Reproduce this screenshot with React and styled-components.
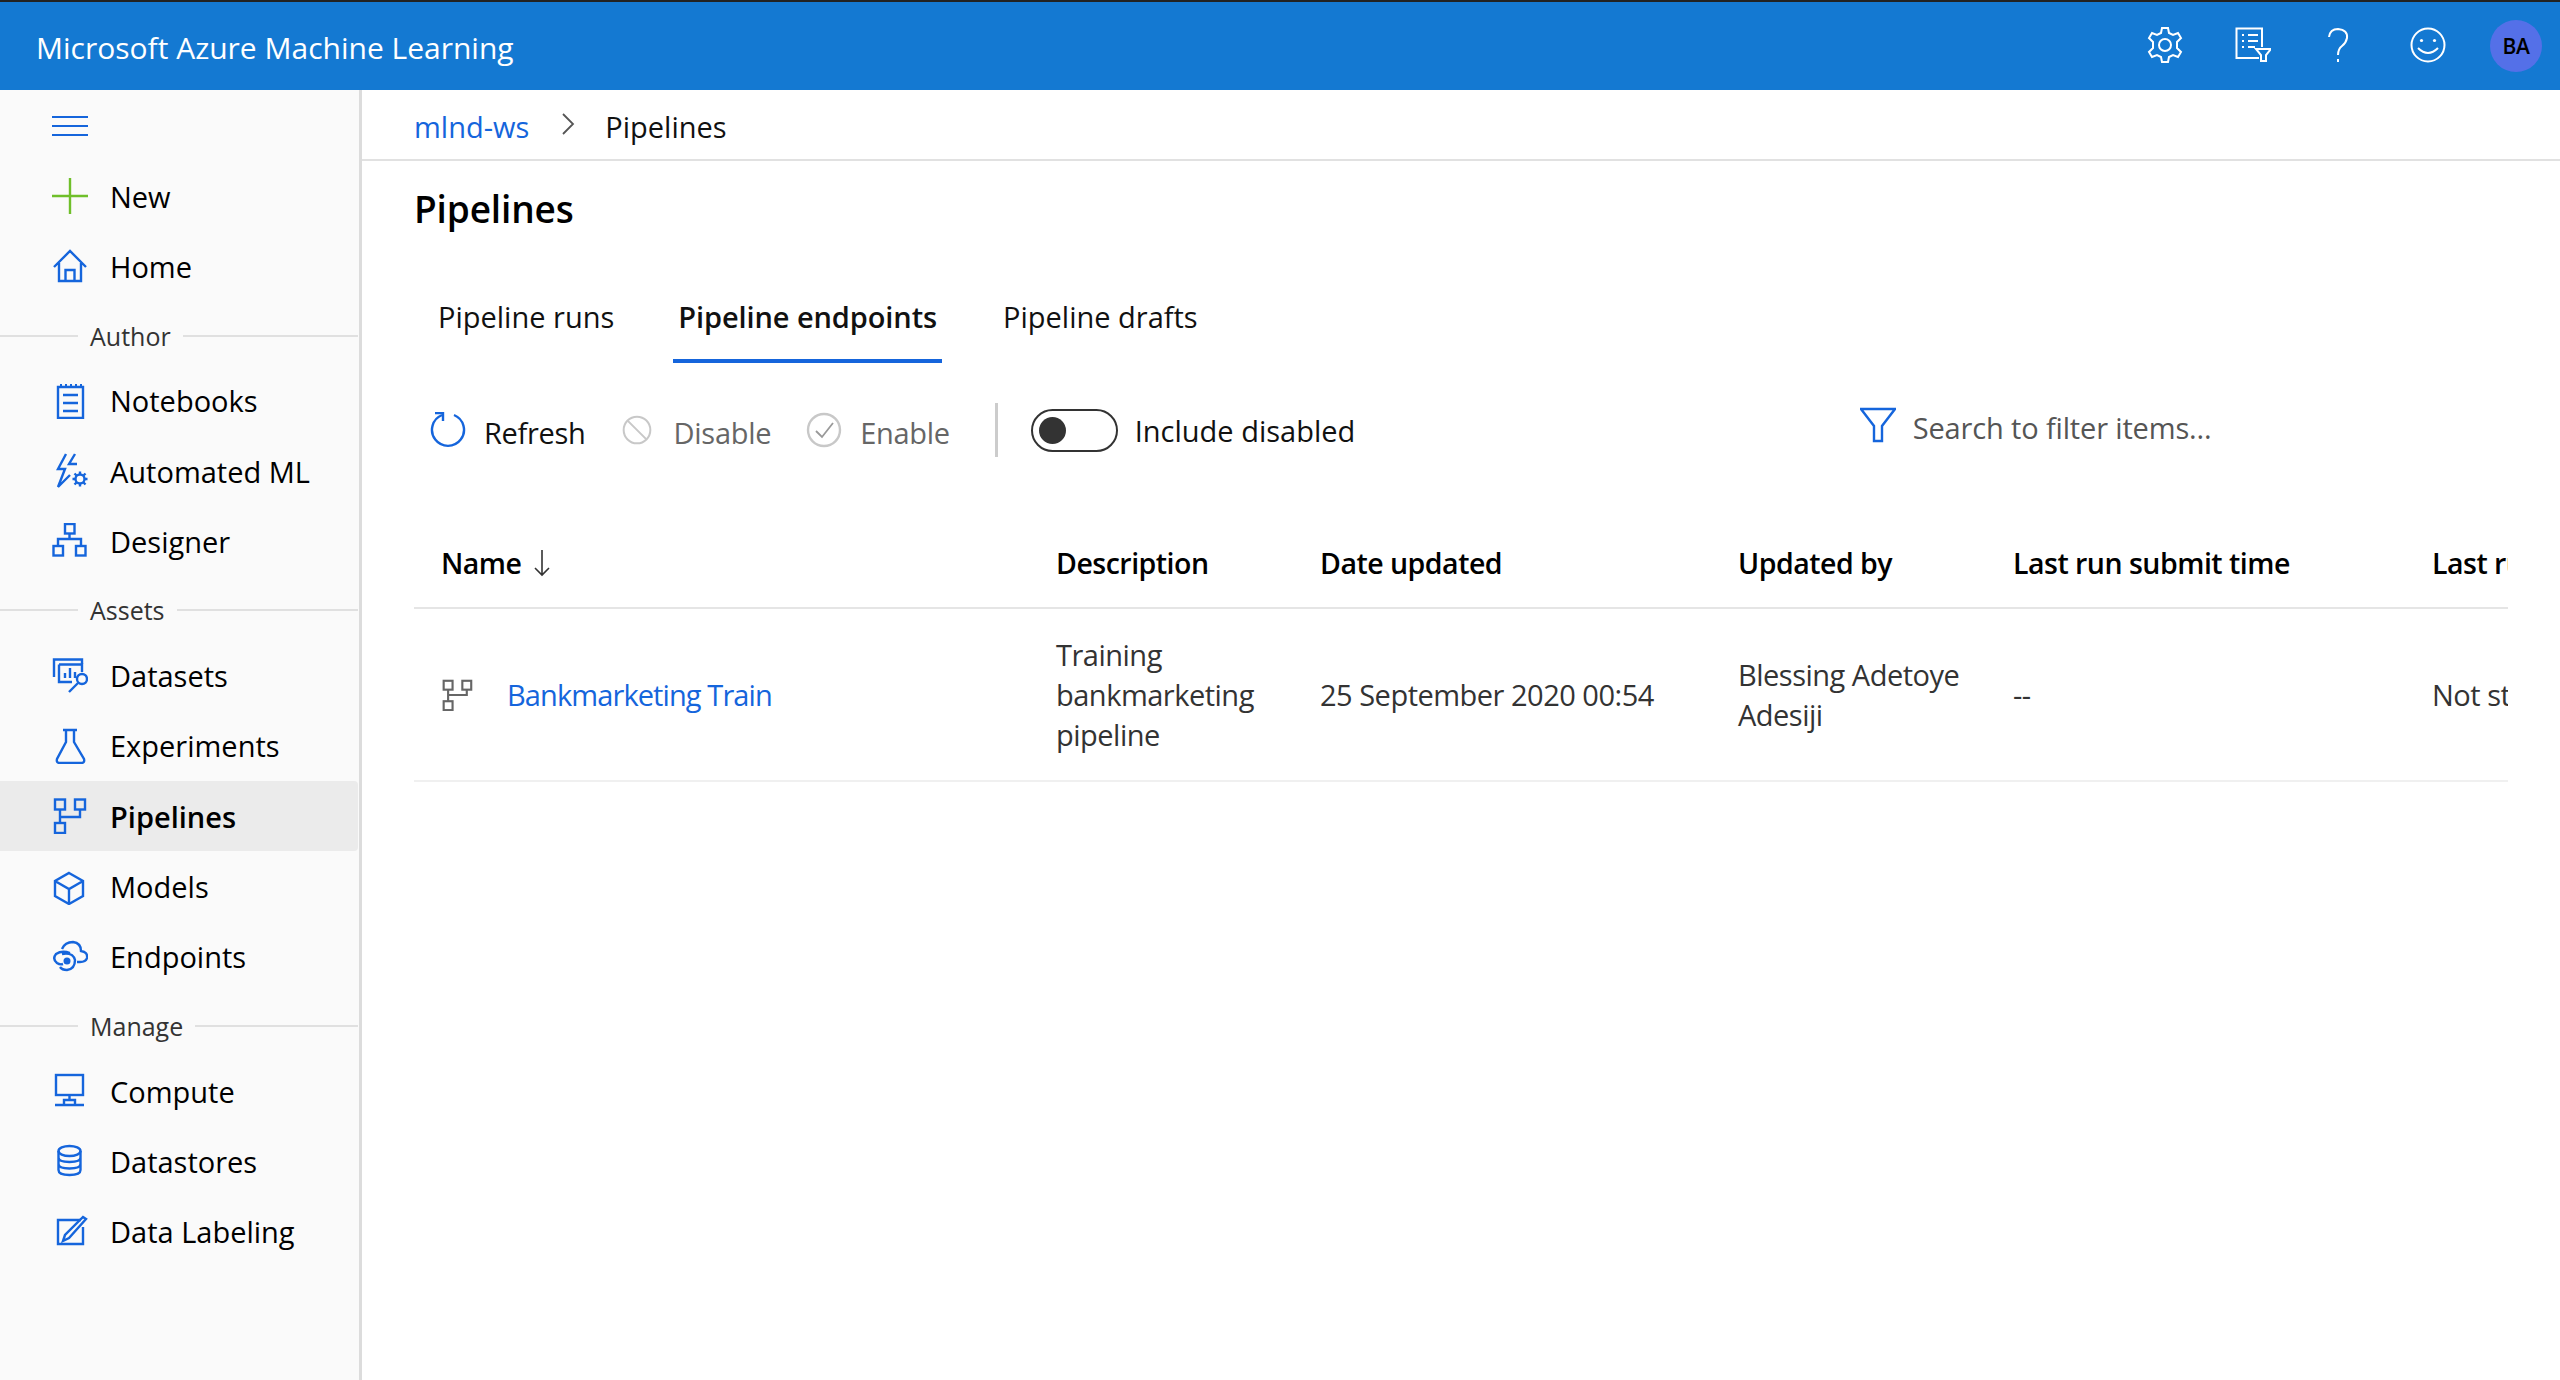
import React from "react";
import styled, { createGlobalStyle } from "styled-components";

const Global = createGlobalStyle`
  html, body { margin: 0; padding: 0; background: #fff; }
  body { font-family: "Open Sans", "Noto Sans", sans-serif; color: #000; overflow: hidden; }
  * { box-sizing: border-box; }
`;

const Page = styled.div`
  width: 2560px;
  height: 1380px;
  display: flex;
  flex-direction: column;
  overflow: hidden;
`;

const TopBar = styled.header`
  height: 90px;
  flex: none;
  background: #1479d2;
  border-top: 2px solid #222;
  color: #fff;
  display: flex;
  align-items: center;
  padding: 0 18px 0 36px;
`;

const Brand = styled.div`
  font-size: 30px;
  margin-top: 3px;
  flex: 1;
`;

const TopIcons = styled.div`
  display: flex;
  align-items: center;
`;

const TopIcon = styled.svg`
  width: 36px;
  height: 36px;
  margin-top: -2px;
  margin-right: ${({ $gap }) => $gap}px;
  fill: none;
  stroke: #fff;
  stroke-width: 2;
`;

const Avatar = styled.div`
  width: 52px;
  height: 52px;
  border-radius: 50%;
  background: #5470e8;
  color: #000;
  font-size: 21px;
  font-weight: 600;
  letter-spacing: -0.3px;
  display: flex;
  align-items: center;
  justify-content: center;
`;

const Body = styled.div`
  flex: 1;
  display: flex;
  min-height: 0;
`;

const Sidebar = styled.nav`
  width: 362px;
  flex: none;
  background: #fafafa;
  border-right: 3px solid #dcdcdc;
  padding-right: 1px;
`;

const Hamburger = styled.div`
  height: 71px;
  padding-left: 52px;
  display: flex;
  align-items: center;
`;

const NavRow = styled.div`
  height: 70.3px;
  display: flex;
  align-items: center;
  padding-left: 52px;
  font-size: 29px;
  border-radius: 0 4px 4px 0;
  font-weight: ${({ $active }) => ($active ? 600 : 400)};
  background: ${({ $active }) => ($active ? "#ebebeb" : "transparent")};
`;

const NavLabel = styled.span`
  margin-left: 22px;
`;

const SectionRow = styled.div`
  height: 64px;
  padding-top: 4px;
  display: flex;
  align-items: center;
  font-size: 25px;
  color: #333;
  &::before {
    content: "";
    width: 78px;
    height: 2px;
    background: #e0e0e0;
    margin-right: 12px;
  }
  &::after {
    content: "";
    flex: 1;
    height: 2px;
    background: #e0e0e0;
    margin-left: 12px;
  }
`;

const Icon = styled.svg`
  width: ${({ $size }) => $size || 36}px;
  height: ${({ $size }) => $size || 36}px;
  flex: none;
  fill: none;
  stroke: ${({ $color }) => $color || "#1565dc"};
  stroke-width: 2.4;
`;

const Main = styled.main`
  flex: 1;
  min-width: 0;
`;

const Breadcrumb = styled.div`
  height: 71px;
  border-bottom: 2px solid #e1e1e1;
  padding: 3px 0 0 52px;
  display: flex;
  align-items: center;
  font-size: 29px;
`;

const Crumb = styled.span`
  color: ${({ $link }) => ($link ? "#1565dc" : "#111")};
`;

const CrumbSep = styled.svg`
  width: 14px;
  height: 24px;
  margin: -4px 30px 0 32px;
  fill: none;
  stroke: #555;
  stroke-width: 1.8;
`;

const Content = styled.div`
  padding: 0 52px;
`;

const Title = styled.h1`
  margin: 0;
  height: 94px;
  display: flex;
  align-items: center;
  font-size: 37px;
  font-weight: 600;
  letter-spacing: -0.15px;
`;

const Tabs = styled.div`
  display: flex;
  height: 108px;
  align-items: stretch;
`;

const Tab = styled.div`
  display: flex;
  align-items: center;
  font-size: 29px;
  padding: 19px ${({ $side }) => $side}px 0;
  margin-right: ${({ $after }) => $after}px;
  font-weight: ${({ $active }) => ($active ? 600 : 400)};
  letter-spacing: ${({ $active }) => ($active ? "-0.1px" : "0")};
  border-bottom: 4px solid ${({ $active }) => ($active ? "#1565dc" : "transparent")};
  color: #111;
`;

const Toolbar = styled.div`
  height: 112px;
  margin-top: 11px;
  padding-left: 16px;
  display: flex;
  align-items: center;
`;

const ToolButton = styled.div`
  display: flex;
  align-items: center;
  font-size: 29px;
  letter-spacing: -0.3px;
  margin-right: ${({ $after }) => $after}px;
  color: ${({ $off }) => ($off ? "#666" : "#111")};
`;

const ToolText = styled.span`
  margin-left: ${({ $gap }) => $gap}px;
  margin-top: 4px;
`;

const ToolSep = styled.div`
  width: 3px;
  height: 54px;
  background: #ccc;
  margin: 0 33px 0 45px;
`;

const Toggle = styled.div`
  width: 87px;
  height: 43px;
  border: 2px solid #333;
  border-radius: 22px;
  padding: 6px;
  margin-right: 17px;
`;

const Knob = styled.div`
  width: 27px;
  height: 27px;
  border-radius: 50%;
  background: #333;
`;

const ToggleLabel = styled.span`
  font-size: 29px;
  color: #111;
  width: 725px;
`;

const Filter = styled.div`
  display: flex;
  align-items: center;
  margin-top: -10px;
  font-size: 29px;
  letter-spacing: -0.15px;
  color: #555;
`;

const Table = styled.div`
  margin-top: 32px;
  overflow: hidden;
  width: 2094px;
`;

const Row = styled.div`
  display: grid;
  grid-template-columns: 615px 264px 418px 275px 419px 200px;
  align-items: center;
  border-bottom: 2px solid ${({ $head }) => ($head ? "#e5e5e5" : "#f0f0f0")};
  height: ${({ $head }) => ($head ? 91 : 173)}px;
  font-size: ${({ $head }) => ($head ? 28.5 : 29)}px;
  line-height: 40px;
  letter-spacing: -0.5px;
  font-weight: ${({ $head }) => ($head ? 600 : 400)};
  color: ${({ $head }) => ($head ? "#000" : "#333")};
`;

const Cell = styled.div`
  padding-left: 27px;
  display: flex;
  align-items: center;
  white-space: ${({ $wrap }) => ($wrap ? "normal" : "nowrap")};
  padding-right: ${({ $wrap }) => ($wrap ? 20 : 0)}px;
`;

const RowLink = styled.span`
  color: #1565dc;
  margin-left: 34px;
  letter-spacing: -0.9px;
`;

const SortArrow = styled.svg`
  width: 18px;
  height: 30px;
  margin-left: 12px;
  fill: none;
  stroke: #333;
  stroke-width: 1.6;
`;

const PipelineGlyph = () => (
  <Icon viewBox="0 0 36 36">
    <rect x="3" y="1.5" width="10" height="10" />
    <rect x="23" y="1.5" width="10" height="10" />
    <rect x="3" y="25" width="10" height="10" />
    <path d="M8 11.5V25M8 19H28V11.5" />
  </Icon>
);

const navIcons = {
  new: (
    <Icon viewBox="0 0 36 36" $color="#6fbf2a">
      <path d="M18 0V36M0 18H36" />
    </Icon>
  ),
  home: (
    <Icon viewBox="0 0 36 36">
      <path d="M2 19L18 3L34 19M7 15V33H29V15M13.5 33V22H22.5V33" />
    </Icon>
  ),
  notebooks: (
    <Icon viewBox="0 0 36 36">
      <path d="M6 4H31V35H6ZM11 12H26M11 20H26M11 28H26" />
      <path d="M9 1V4M14 1V4M19 1V4M24 1V4M29 1V4" strokeWidth="2" />
    </Icon>
  ),
  automl: (
    <Icon viewBox="0 0 36 36">
      <path d="M14 1L6 16H13L6 34L18 22" />
      <path d="M23 1L17 11H25" />
      <circle cx="28" cy="26" r="4.5" />
      <path d="M28 18.5V21.5M28 30.5V33.5M20.5 26H23.5M32.5 26H35.5M22.5 20.5L24.5 22.5M31.5 29.5L33.5 31.5M33.5 20.5L31.5 22.5M24.5 29.5L22.5 31.5" />
    </Icon>
  ),
  designer: (
    <Icon viewBox="0 0 36 36">
      <rect x="13" y="1" width="9.5" height="9.5" />
      <rect x="1.5" y="23" width="9.5" height="9.5" />
      <rect x="24" y="23" width="9.5" height="9.5" />
      <path d="M17.5 10.5V16M6 23V16H29V23" />
    </Icon>
  ),
  datasets: (
    <Icon viewBox="0 0 36 36">
      <path d="M2 19V1.5H30V6" />
      <path d="M7 6.5H30V14M7 6.5V24H20" />
      <path d="M13 20V15M18 20V10M23 20V14" />
      <circle cx="30" cy="21" r="5" />
      <path d="M26 25L17 34" />
    </Icon>
  ),
  experiments: (
    <Icon viewBox="0 0 36 36">
      <path d="M11 2H25M14 2V14L5 31Q4 35 8 35H29Q33 35 32 31L22 14V2" />
    </Icon>
  ),
  pipelines: <PipelineGlyph />,
  models: (
    <Icon viewBox="0 0 36 36">
      <path d="M17 4L31 12V27L17 35L3 27V12ZM3 12L17 20L31 12M17 20V35" />
    </Icon>
  ),
  endpoints: (
    <Icon viewBox="0 0 36 36">
      <path d="M10 10Q13 3 21 3Q29 4 29 12Q36 13 35 19Q34 23 28 23H25" />
      <path d="M18 14Q10 11 4 15Q0 20 5 24Q8 26 11 25" />
      <path d="M10 15Q21 13 23 21Q23 30 15 31Q10 31 8 28" />
      <circle cx="15" cy="22" r="3.5" fill="#1565dc" stroke="none" />
    </Icon>
  ),
  compute: (
    <Icon viewBox="0 0 36 36">
      <rect x="4" y="2" width="27" height="20" />
      <path d="M17.5 22V26M12 32V27H23V32M3 32H32" />
    </Icon>
  ),
  datastores: (
    <Icon viewBox="0 0 36 36">
      <ellipse cx="17.5" cy="8" rx="11" ry="5" />
      <path d="M6.5 8V27Q6.5 32 17.5 32Q28.5 32 28.5 27V8M6.5 14.5Q6.5 19 17.5 19Q28.5 19 28.5 14.5M6.5 21Q6.5 25.5 17.5 25.5Q28.5 25.5 28.5 21" />
    </Icon>
  ),
  labeling: (
    <Icon viewBox="0 0 36 36">
      <path d="M29 6H6V30H31V13" />
      <path d="M31 3L34 5L17 24L11 27L13 21Z" />
    </Icon>
  ),
};

const navGroups = [
  { items: [["New", "new"], ["Home", "home"]] },
  { title: "Author", items: [["Notebooks", "notebooks"], ["Automated ML", "automl"], ["Designer", "designer"]] },
  {
    title: "Assets",
    items: [["Datasets", "datasets"], ["Experiments", "experiments"], ["Pipelines", "pipelines"], ["Models", "models"], ["Endpoints", "endpoints"]],
  },
  { title: "Manage", items: [["Compute", "compute"], ["Datastores", "datastores"], ["Data Labeling", "labeling"]] },
];

export default function App() {
  return (
    <Page>
      <Global />
      <TopBar>
        <Brand>Microsoft Azure Machine Learning</Brand>
        <TopIcons>
          <TopIcon viewBox="0 0 36 36" $gap={52}>
            <circle cx="18" cy="18" r="6" />
            <path d="M15 1H21L22 6L26 8L31 6L34 11L30 15V21L34 25L31 30L26 28L22 30L21 35H15L14 30L10 28L5 30L2 25L6 21V15L2 11L5 6L10 8L14 6Z" />
          </TopIcon>
          <TopIcon viewBox="0 0 36 36" $gap={49}>
            <path d="M24 31H1.5V1.5H27V20" />
            <path d="M7 8H9M13 8H23M7 14H9M13 14H23M7 20H9M13 20H20" />
            <path d="M21 22H36L31 28V34H26V28Z" />
          </TopIcon>
          <TopIcon viewBox="0 0 36 36" $gap={54}>
            <path d="M9 10Q10 2 18 2Q28 3 27 11Q26 16 22 19Q18 22 18 28" />
            <path d="M18 32V35" />
          </TopIcon>
          <TopIcon viewBox="0 0 36 36" $gap={44}>
            <circle cx="18" cy="18" r="16.5" />
            <circle cx="11.5" cy="13.5" r="1.6" fill="#fff" stroke="none" />
            <circle cx="24.5" cy="13.5" r="1.6" fill="#fff" stroke="none" />
            <path d="M8 21Q18 31 28 21" />
          </TopIcon>
          <Avatar>BA</Avatar>
        </TopIcons>
      </TopBar>
      <Body>
        <Sidebar>
          <Hamburger>
            <Icon viewBox="0 0 36 36">
              <path d="M0 9H36M0 18H36M0 27H36" strokeWidth="2" />
            </Icon>
          </Hamburger>
          {navGroups.map((group) => (
            <div key={group.title || "top"}>
              {group.title && <SectionRow>{group.title}</SectionRow>}
              {group.items.map(([label, icon]) => (
                <NavRow key={label} $active={label === "Pipelines"}>
                  {navIcons[icon]}
                  <NavLabel>{label}</NavLabel>
                </NavRow>
              ))}
            </div>
          ))}
        </Sidebar>
        <Main>
          <Breadcrumb>
            <Crumb $link>mlnd-ws</Crumb>
            <CrumbSep viewBox="0 0 14 24">
              <path d="M2 2L12 12L2 22" />
            </CrumbSep>
            <Crumb>Pipelines</Crumb>
          </Breadcrumb>
          <Content>
            <Title>Pipelines</Title>
            <Tabs>
              <Tab $side={24} $after={35}>Pipeline runs</Tab>
              <Tab $active $side={5} $after={61}>Pipeline endpoints</Tab>
              <Tab $side={0}>Pipeline drafts</Tab>
            </Tabs>
            <Toolbar>
              <ToolButton $after={36}>
                <Icon viewBox="0 0 36 36">
                  <path d="M12 3A16 16 0 1 0 24 3" />
                  <path d="M5 1H13V9" />
                </Icon>
                <ToolText $gap={18}>Refresh</ToolText>
              </ToolButton>
              <ToolButton $off $after={35}>
                <Icon viewBox="0 0 36 36" $color="#c8c8c8" $size={30}>
                  <circle cx="18" cy="18" r="16" />
                  <path d="M7 7L29 29" />
                </Icon>
                <ToolText $gap={22}>Disable</ToolText>
              </ToolButton>
              <ToolButton $off $after={0}>
                <Icon viewBox="0 0 36 36" $color="#c8c8c8">
                  <circle cx="18" cy="18" r="16" />
                  <path d="M10 19L16 25L27 11" stroke="#999" strokeWidth="1.8" />
                </Icon>
                <ToolText $gap={18}>Enable</ToolText>
              </ToolButton>
              <ToolSep />
              <Toggle>
                <Knob />
              </Toggle>
              <ToggleLabel>Include disabled</ToggleLabel>
              <Filter>
                <Icon viewBox="0 0 36 36">
                  <path d="M1 2H35L22 19V34H14V19Z" />
                </Icon>
                <ToolText $gap={17}>Search to filter items...</ToolText>
              </Filter>
            </Toolbar>
            <Table>
              <Row $head>
                <Cell>
                  Name
                  <SortArrow viewBox="0 0 18 30">
                    <path d="M9 2V27M2 20L9 27L16 20" />
                  </SortArrow>
                </Cell>
                <Cell>Description</Cell>
                <Cell>Date updated</Cell>
                <Cell>Updated by</Cell>
                <Cell>Last run submit time</Cell>
                <Cell>Last run status</Cell>
              </Row>
              <Row>
                <Cell>
                  <Icon viewBox="0 0 36 36" $color="#666" $size={32}>
                    <rect x="3" y="2" width="10" height="10" />
                    <rect x="24" y="2" width="10" height="10" />
                    <rect x="3" y="25" width="10" height="10" />
                    <path d="M8 12V25M8 18H29V12" />
                  </Icon>
                  <RowLink>Bankmarketing Train</RowLink>
                </Cell>
                <Cell $wrap>Training bankmarketing pipeline</Cell>
                <Cell>25 September 2020 00:54</Cell>
                <Cell $wrap>Blessing Adetoye Adesiji</Cell>
                <Cell>--</Cell>
                <Cell>Not started</Cell>
              </Row>
            </Table>
          </Content>
        </Main>
      </Body>
    </Page>
  );
}
